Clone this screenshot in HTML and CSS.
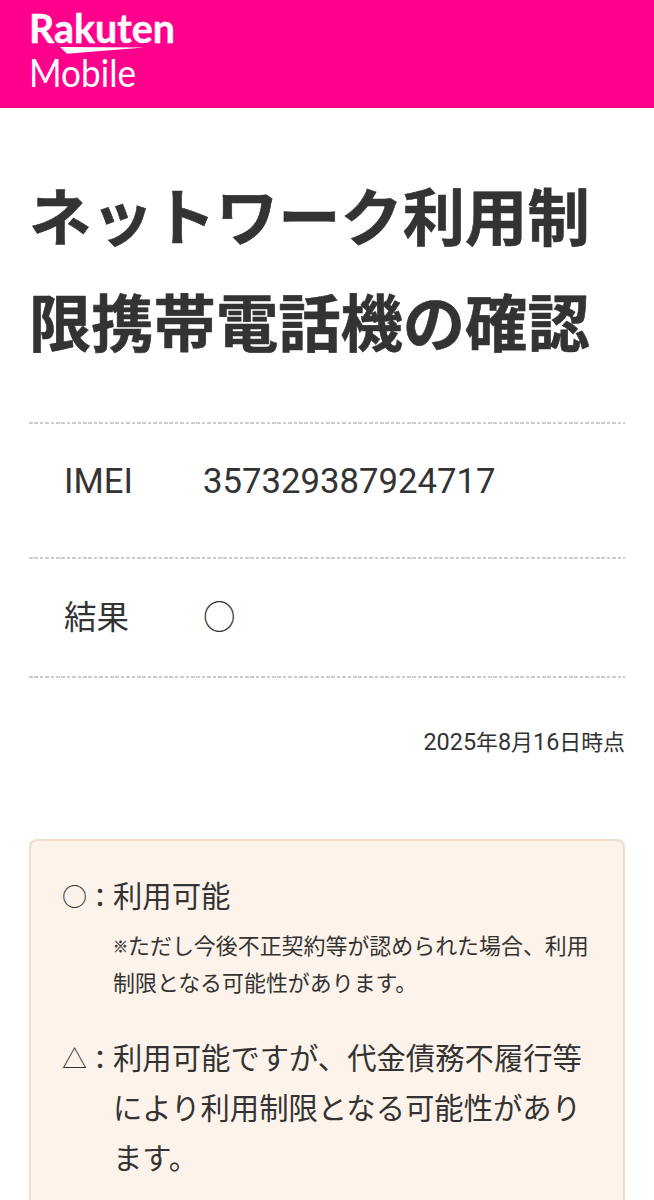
FILE: index.html
```html
<!DOCTYPE html>
<html lang="ja">
<head>
    <meta charset="UTF-8">
    <meta name="viewport" content="width=device-width, initial-scale=1.0">
    <title>ネットワーク利用制限携帯電話機の確認</title>
    <link rel="stylesheet" href="styles.css">
</head>
<body>

<!-- Header -->
<header class="header">
    <svg class="logo" width="150" height="84" viewBox="0 0 150 84" role="img" aria-label="Rakuten Mobile">
        <text class="logo-rakuten" x="-2" y="34" textLength="146" lengthAdjust="spacingAndGlyphs">Rakuten</text>
        <polygon points="29,38 113,38.4 36,44.8" fill="#fff"/>
        <text class="logo-mobile" x="-2" y="78" textLength="107" lengthAdjust="spacingAndGlyphs">Mobile</text>
    </svg>
</header>

<main class="container">
    <h1 class="title">ネットワーク利用制限携帯電話機の確認</h1>

    <!-- Result -->
    <dl class="result">
        <div class="row">
            <dt class="latin">IMEI</dt>
            <dd class="latin">357329387924717</dd>
        </div>
        <div class="row">
            <dt>結果</dt>
            <dd class="mark">○</dd>
        </div>
    </dl>
    <p class="date"><span>2025</span>年<span>8</span>月<span>16</span>日時点</p>

    <!-- Legend -->
    <ul class="legend">
        <li>
            <span class="symbol">○</span><span class="colon">：</span>
            <div class="text">
                利用可能
                <p class="note"><span class="kome">※</span>ただし今後不正契約等が認められた場合、利用制限となる可能性があります。</p>
            </div>
        </li>
        <li>
            <span class="symbol">△</span><span class="colon">：</span>
            <div class="text">利用可能ですが、代金債務不履行等により利用制限となる可能性があります。</div>
        </li>
    </ul>
</main>

</body>
</html>
```
FILE: styles.css
```css
* {
    box-sizing: border-box;
}

body {
    margin: 0;
    font-family: "Noto Sans CJK JP", sans-serif;
    color: #333;
    background-color: #fff;
}

/* Header */
.header {
    height: 108px;
    padding: 9px 31px 0;
    background-color: #ff008c;
    border-bottom: 1px solid #e5007e;
}

.logo {
    display: block;
    overflow: visible;
}

.logo text {
    fill: #fff;
}

.logo-rakuten {
    font-family: Lato, sans-serif;
    font-size: 39.5px;
    font-weight: 700;
    stroke: #fff;
    stroke-width: 0.4px;
}

.logo-mobile {
    font-family: Lato, sans-serif;
    font-size: 38.5px;
    font-weight: 400;
}

/* Main */
.container {
    padding: 53px 29px 0;
}

.title {
    width: 580px;
    margin: 0 0 49px;
    font-size: 62.3px;
    line-height: 106px;
    font-weight: 700;
    -webkit-text-stroke: 0.6px #333;
}

/* Result table */
.result {
    margin: 0;
    padding-bottom: 2px;
    background: repeating-linear-gradient(90deg, #ccc 0 3.6px, transparent 3.6px 5.4px) bottom / 100% 2px no-repeat;
}

.row {
    display: flex;
    height: 119px;
    padding: 33px 35px 0;
    font-size: 32.5px;
    line-height: 50px;
    background: repeating-linear-gradient(90deg, #ccc 0 3.6px, transparent 3.6px 5.4px) top / 100% 2px no-repeat;
}

.row:first-child {
    height: 135px;
    padding-top: 34px;
}

.row dt {
    width: 139px;
}

.row dd {
    margin: 0;
}

.row .latin {
    font-family: Roboto, sans-serif;
    font-size: 34.7px;
}

.row .mark {
    font-size: 32.5px;
}

.date {
    margin: 47px 0 0;
    font-size: 21.9px;
    line-height: 32px;
    text-align: right;
}

.date span {
    font-family: Roboto, sans-serif;
    font-size: 23.4px;
}

/* Legend */
.legend {
    height: 361px;
    margin: 81px 0 0;
    padding: 28px 31px 0;
    list-style: none;
    background-color: #fdf3ea;
    border: 2px solid #f0dcc8;
    border-bottom: 0;
    border-radius: 8px 8px 0 0;
}

.legend li {
    display: flex;
    margin-bottom: 31px;
    font-size: 29.35px;
    line-height: 50px;
}

.legend li:last-child {
    margin-bottom: 0;
}

.symbol {
    width: 25px;
    padding-top: 1px;
    font-size: 25px;
}

.colon {
    width: 26px;
    padding-top: 2px;
    font-size: 26px;
    -webkit-text-stroke: 0.4px #333;
}

.text {
    flex: 1;
}

.note {
    width: 480px;
    margin: 7px 0 0;
    font-size: 21.95px;
    line-height: 37px;
}

.kome {
    display: inline-block;
    width: 15px;
    font-size: 15px;
    line-height: 20px;
    vertical-align: 2px;
    -webkit-text-stroke: 0.3px #333;
}
```
